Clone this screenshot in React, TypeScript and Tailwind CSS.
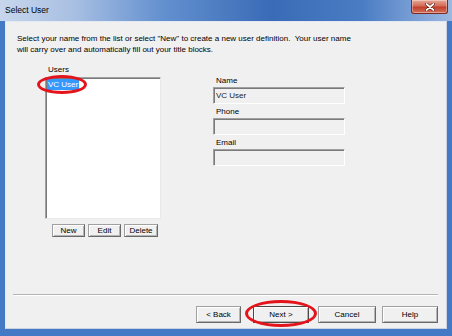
import React from "react";

function Btn({ label, w, def = false, h = "h-[13px]" }: { label: string; w: string; def?: boolean; h?: string }) {
  return (
    <div
      className={`${w} ${h} flex items-center justify-center bg-[#f0f0f0] border ${
        def ? "border-[#4a4a4a]" : "border-[#a0a0a0] border-r-[#696969] border-b-[#696969]"
      } shadow-[inset_1px_1px_0_#ffffff,inset_-1px_-1px_0_#b5b5b5] text-[8px] leading-[10px] text-black`}
    >
      {label}
    </div>
  );
}

function Field({ value }: { value?: string }) {
  return (
    <div className="h-[17px] w-[132px] bg-[#f0f0f0] border border-t-[#a0a0a0] border-l-[#a0a0a0] border-r-white border-b-white shadow-[inset_1px_1px_0_#7a7a7a] flex items-center pl-[2px] text-[8px] leading-[11px] text-[#222]">
      {value}
    </div>
  );
}

export default function App() {
  return (
    <div className="relative w-[452px] h-[336px] overflow-hidden bg-[#4479c6] flex flex-col font-['Liberation_Sans',Arial,sans-serif] text-black">
      {/* title bar */}
      <div className="h-[21px] shrink-0 flex items-start bg-[linear-gradient(90deg,#c7d6ec_0%,#a9c0e3_16%,#6390cf_36%,#3a6bb6_60%,#4a7cc4_80%,#9cb8e1_100%)]">
        <span className="ml-[5px] mt-[5px] text-[8.5px] leading-[10px] text-black">Select User</span>
        <div className="ml-auto mr-[4px] w-[37px] h-[14px] rounded-b-[3px] border border-t-0 border-[#7c2a1f] bg-[linear-gradient(180deg,#e7a898_0%,#d56c58_45%,#c0402c_55%,#d5705a_100%)] flex items-center justify-center shadow-[inset_0_0_0_1px_rgba(255,255,255,0.35)]">
          <svg width="10" height="8" viewBox="0 0 10 8">
            <path d="M1.5 1 L8.5 7 M8.5 1 L1.5 7" stroke="#5a1a12" strokeWidth="3" strokeLinecap="round" />
            <path d="M1.5 1 L8.5 7 M8.5 1 L1.5 7" stroke="#ffffff" strokeWidth="1.7" strokeLinecap="round" />
          </svg>
        </div>
      </div>

      {/* frame body */}
      <div className="flex-1 flex px-[5px] pb-[7px]">
        <div className="flex-1 flex flex-col bg-[#f0f0f0] border border-[#e2e9f3] border-b-[#c9d3e2] border-r-[#c9d3e2]">
          <p className="pl-[11px] pt-[11px] text-[8px] leading-[11px] whitespace-pre text-black">
            {'Select your name from the list or select "New" to create a new user definition.  Your user name\nwill carry over and automatically fill out your title blocks.'}
          </p>

          <div className="flex mt-[9px] pl-[39px]">
            {/* left column */}
            <div className="flex flex-col w-[116px]">
              <span className="pl-[3px] text-[8px] leading-[11px]">Users</span>
              <div className="mt-[2px] h-[142px] bg-white border border-t-[#a0a0a0] border-l-[#a0a0a0] border-r-[#e8e8e8] border-b-[#e8e8e8] shadow-[inset_1px_1px_0_#7a7a7a] pt-[1px] pl-[1px] text-[8px] leading-[11px]">
                <div className="w-fit bg-[#3399ff] text-white px-[1px] text-[8px] leading-[11px]">VC User</div>
              </div>
              <div className="flex gap-[3px] ml-[7px] mt-[5px]">
                <Btn label="New" w="w-[33px]" />
                <Btn label="Edit" w="w-[33px]" />
                <Btn label="Delete" w="w-[34px]" />
              </div>
            </div>

            {/* right column */}
            <div className="ml-[52px] pt-[11px] flex flex-col w-[132px]">
              <span className="pl-[3px] text-[8px] leading-[11px]">Name</span>
              <div className="mt-[1px]">
                <Field value="VC User" />
              </div>
              <span className="mt-[2px] pl-[3px] text-[8px] leading-[11px]">Phone</span>
              <div className="mt-[1px]">
                <Field />
              </div>
              <span className="mt-[2px] pl-[3px] text-[8px] leading-[11px]">Email</span>
              <div className="mt-[1px]">
                <Field />
              </div>
            </div>
          </div>

          {/* bottom */}
          <div className="mt-auto ml-[7px] mr-[8px] h-[2px] border-t border-b border-t-[#b4b4b4] border-b-white" />
          <div className="flex justify-end mr-[8px] mt-[10px] mb-[5px]">
            <Btn label="< Back" w="w-[45px]" h="h-[17px]" />
            <div className="ml-[12px]">
              <Btn label="Next >" w="w-[56px]" h="h-[17px]" def />
            </div>
            <div className="ml-[9px]">
              <Btn label="Cancel" w="w-[58px]" h="h-[17px]" />
            </div>
            <div className="ml-[6px]">
              <Btn label="Help" w="w-[56px]" h="h-[17px]" />
            </div>
          </div>
        </div>
      </div>

      {/* red annotation ellipses */}
      <div className="absolute left-[37px] top-[75px] w-[50px] h-[19px] rounded-[50%] border-[3px] border-[#e3141b] pointer-events-none" />
      <div className="absolute left-[245px] top-[300px] w-[72px] h-[27px] rounded-[50%] border-[3px] border-[#e3141b] pointer-events-none" />
    </div>
  );
}
